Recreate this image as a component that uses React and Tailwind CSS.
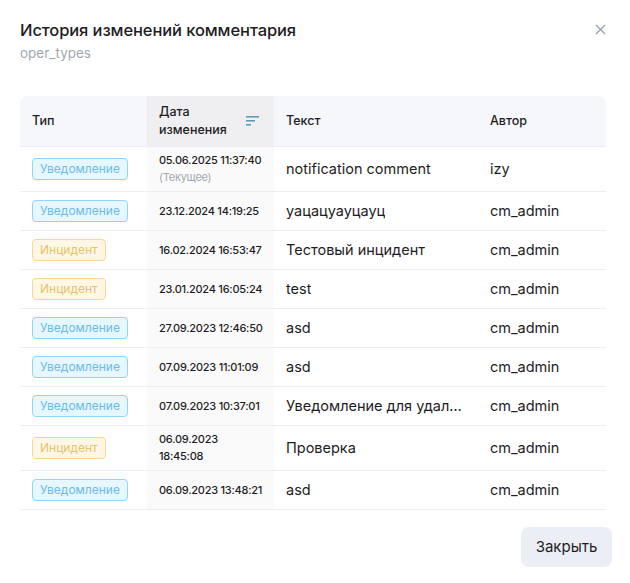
import React from 'react'

const ROWS = [
  { type: 'n', date: ['05.06.2025 11:37:40'], current: true, text: 'notification comment', author: 'izy' },
  { type: 'n', date: ['23.12.2024 14:19:25'], text: 'уацацуауцауц', author: 'cm_admin' },
  { type: 'i', date: ['16.02.2024 16:53:47'], text: 'Тестовый инцидент', author: 'cm_admin' },
  { type: 'i', date: ['23.01.2024 16:05:24'], text: 'test', author: 'cm_admin' },
  { type: 'n', date: ['27.09.2023 12:46:50'], text: 'asd', author: 'cm_admin' },
  { type: 'n', date: ['07.09.2023 11:01:09'], text: 'asd', author: 'cm_admin' },
  { type: 'n', date: ['07.09.2023 10:37:01'], text: 'Уведомление для удаления', author: 'cm_admin' },
  { type: 'i', date: ['06.09.2023', '18:45:08'], text: 'Проверка', author: 'cm_admin' },
  { type: 'n', date: ['06.09.2023 13:48:21'], text: 'asd', author: 'cm_admin' },
]

function Tag({ type }) {
  if (type === 'i') {
    return (
      <span className="my-[2px] flex h-[22px] items-center rounded-[4px] border border-[#ffd591] bg-[#fff7e6] px-[7px] text-[12px] leading-none text-[#e3c46a]">
        Инцидент
      </span>
    )
  }
  return (
    <span className="my-[2px] flex h-[22px] items-center rounded-[4px] border border-[#91d5ff] bg-[#e6f7ff] px-[7px] text-[12px] leading-none text-[#6cbbe8]">
      Уведомление
    </span>
  )
}

function SortIcon() {
  return (
    <svg width="14" height="10" viewBox="0 0 14 10" className="shrink-0">
      <rect x="0" y="0" width="13" height="1.6" fill="#5c9fb5" />
      <rect x="0" y="4" width="9" height="1.6" fill="#5c9fb5" />
      <rect x="0" y="8" width="5" height="1.6" fill="#5c9fb5" />
    </svg>
  )
}

export default function App() {
  return (
    <div className="relative h-[583px] w-[630px] bg-white font-['Inter',sans-serif] text-[#1d1d1f]">
      {/* Header */}
      <div className="flex items-start justify-between pl-5 pr-[24px] pt-[20px]">
        <div>
          <h2 className="text-[16.5px] font-medium leading-[21px] tracking-[-0.1px]">История изменений комментария</h2>
          <p className="mt-[3px] text-[13.5px] leading-[18px] text-[#a3a7b0]">oper_types</p>
        </div>
        <button className="mt-[4px] text-[#9aa0ab]" aria-label="Закрыть">
          <svg width="11" height="11" viewBox="0 0 11 11">
            <path d="M1 1 L10 10 M10 1 L1 10" stroke="currentColor" strokeWidth="1.4" />
          </svg>
        </button>
      </div>

      {/* Table */}
      <div className="mx-5 mt-[34px] w-[586px]">
        <div className="grid grid-cols-[127px_127px_204px_128px] overflow-hidden rounded-t-[8px] bg-[#f6f7fa] text-[12.5px] font-medium">
          <div className="flex h-[50px] items-center px-3">Тип</div>
          <div className="flex h-[50px] items-center justify-between bg-[#efeff1] pl-3 pr-[14px]">
            <span className="leading-[18px]">Дата<br />изменения</span>
            <SortIcon />
          </div>
          <div className="flex h-[50px] items-center px-3">Текст</div>
          <div className="flex h-[50px] items-center px-3">Автор</div>
        </div>

        {ROWS.map((r, i) => (
          <div key={i} className="grid grid-cols-[127px_127px_204px_128px] border-t border-[#eceef3]">
            <div className="flex items-center px-3 py-[6px]">
              <Tag type={r.type} />
            </div>
            <div className="flex flex-col justify-center bg-[#fafafa] px-3 py-[5px] text-[11px] font-medium leading-[17px] tracking-[-0.25px] whitespace-nowrap">
              {r.date.map(d => <span key={d}>{d}</span>)}
              {r.current && <span className="font-normal text-[#a3a7b0]">(Текущее)</span>}
            </div>
            <div className="flex min-w-0 items-center px-3 text-[14.5px] leading-[20px]">
              <span className="truncate">{r.text}</span>
            </div>
            <div className="flex items-center px-3 text-[14.5px] leading-[20px]">{r.author}</div>
          </div>
        ))}
        <div className="border-t border-[#eceef3]" />
      </div>

      {/* Footer */}
      <div className="mt-[17px] flex justify-end pr-[18px]">
        <button className="h-10 w-[91px] rounded-[8px] bg-[#eceef5] text-[15px] text-[#1d1d1f]">Закрыть</button>
      </div>
    </div>
  )
}
